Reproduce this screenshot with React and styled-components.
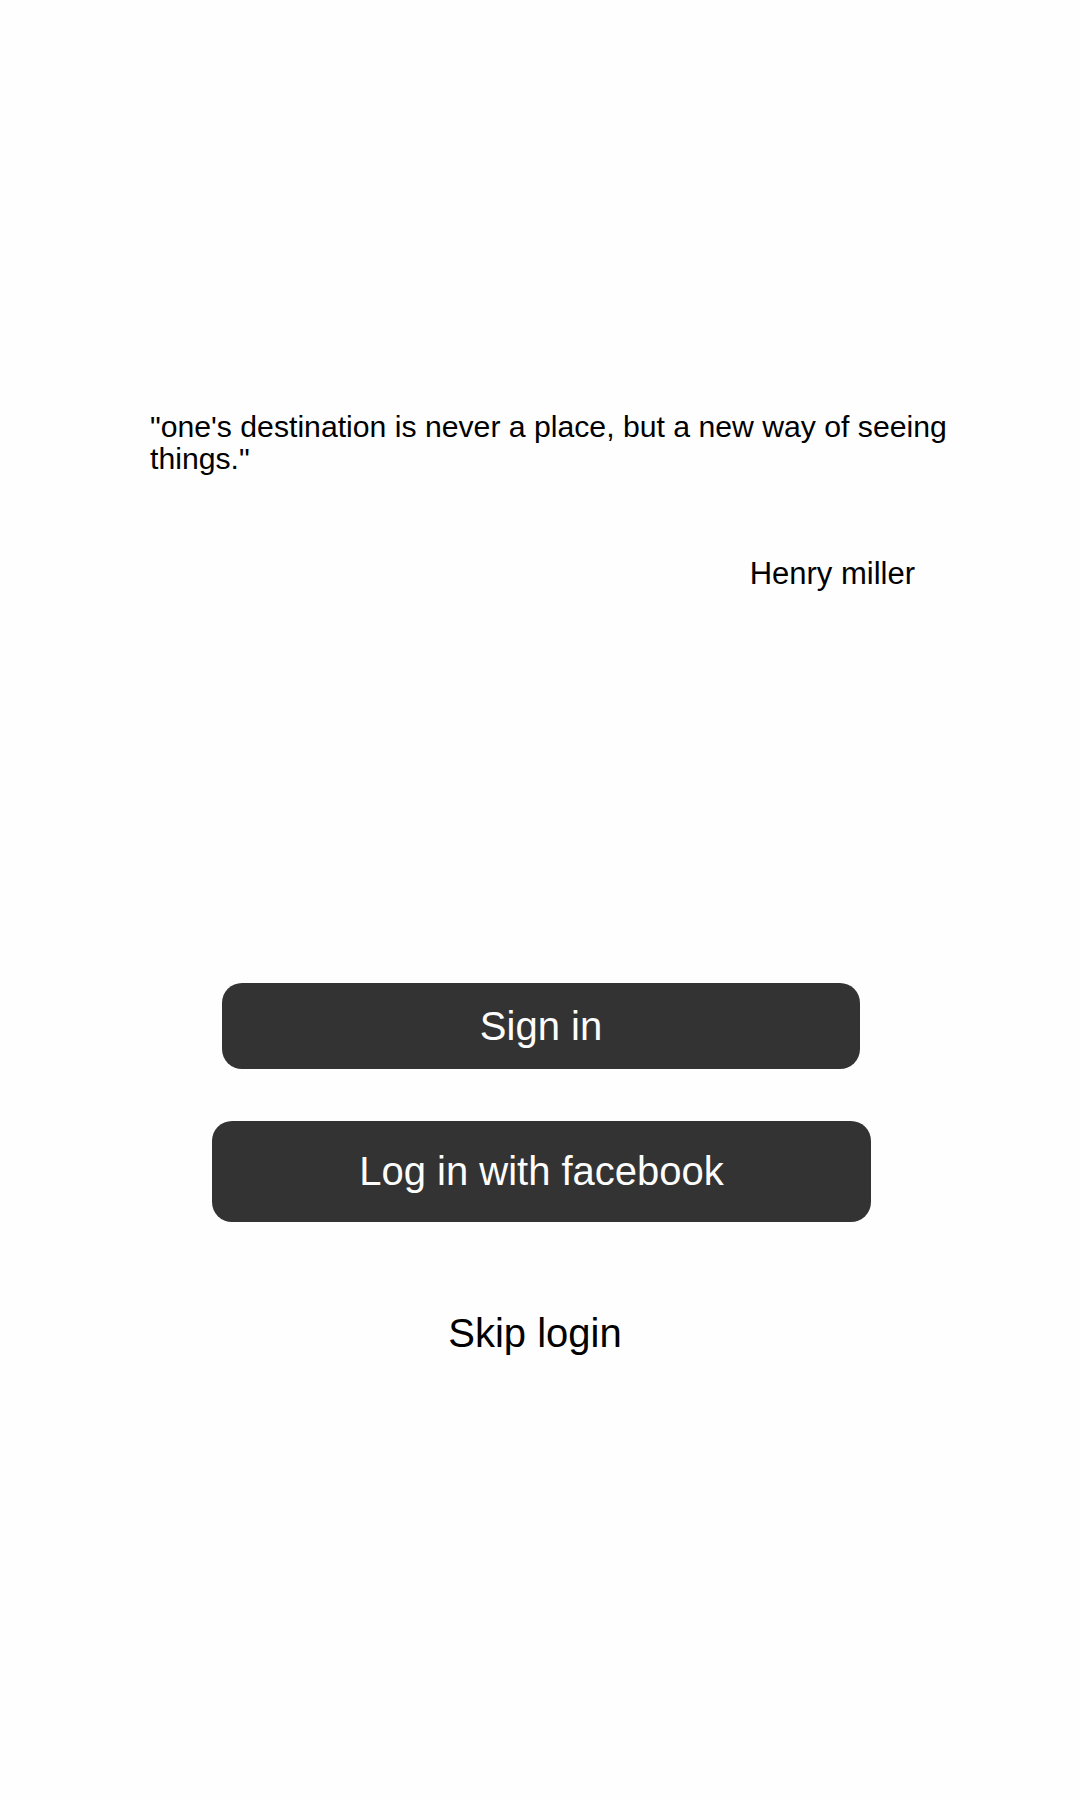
import React from "react";
import styled, { createGlobalStyle } from "styled-components";

const Global = createGlobalStyle`
  html, body { margin: 0; padding: 0; background: #fefefe; }
  body { font-family: "Liberation Sans", Arial, sans-serif; }
`;

const Page = styled.div`
  min-height: 1800px;
  background: #fefefe;
  display: flex;
  flex-direction: column;
  box-sizing: border-box;
  padding-top: 411px;
`;

const QuoteBlock = styled.section`
  display: flex;
  flex-direction: column;
  padding: 0 120px 0 150px;
`;

const Quote = styled.p`
  margin: 0;
  font-size: 30.2px;
  line-height: 32px;
  color: #000;
  max-width: 805px;
`;

const Author = styled.p`
  margin: 81px 0 0 0;
  align-self: flex-end;
  padding-right: 45px;
  font-size: 31px;
  line-height: 35px;
  color: #000;
`;

const Actions = styled.div`
  display: flex;
  flex-direction: column;
  align-items: center;
  margin-top: 392px;
`;

const Button = styled.button`
  box-sizing: border-box;
  width: ${(p) => p.$w}px;
  height: ${(p) => p.$h}px;
  margin-top: ${(p) => p.$mt || 0}px;
  margin-left: ${(p) => p.$ml || 0}px;
  border: none;
  border-radius: 20px;
  background: #333333;
  color: #fdfdfd;
  font-family: "Liberation Sans", Arial, sans-serif;
  font-size: 40px;
  display: flex;
  align-items: center;
  justify-content: center;
  padding: 0;
  cursor: pointer;
`;

const Skip = styled.button`
  margin-top: 88px;
  margin-right: 10px;
  border: none;
  background: transparent;
  color: #000;
  font-family: "Liberation Sans", Arial, sans-serif;
  font-size: 40px;
  line-height: 46px;
  padding: 0;
  cursor: pointer;
`;

export default function App() {
  return (
    <>
      <Global />
      <Page>
        <QuoteBlock>
          <Quote>"one's destination is never a place, but a new way of seeing things."</Quote>
          <Author>Henry miller</Author>
        </QuoteBlock>
        <Actions>
          <Button $w={638} $h={86} $ml={2}>Sign in</Button>
          <Button $w={659} $h={101} $mt={52} $ml={3}>Log in with facebook</Button>
          <Skip>Skip login</Skip>
        </Actions>
      </Page>
    </>
  );
}
